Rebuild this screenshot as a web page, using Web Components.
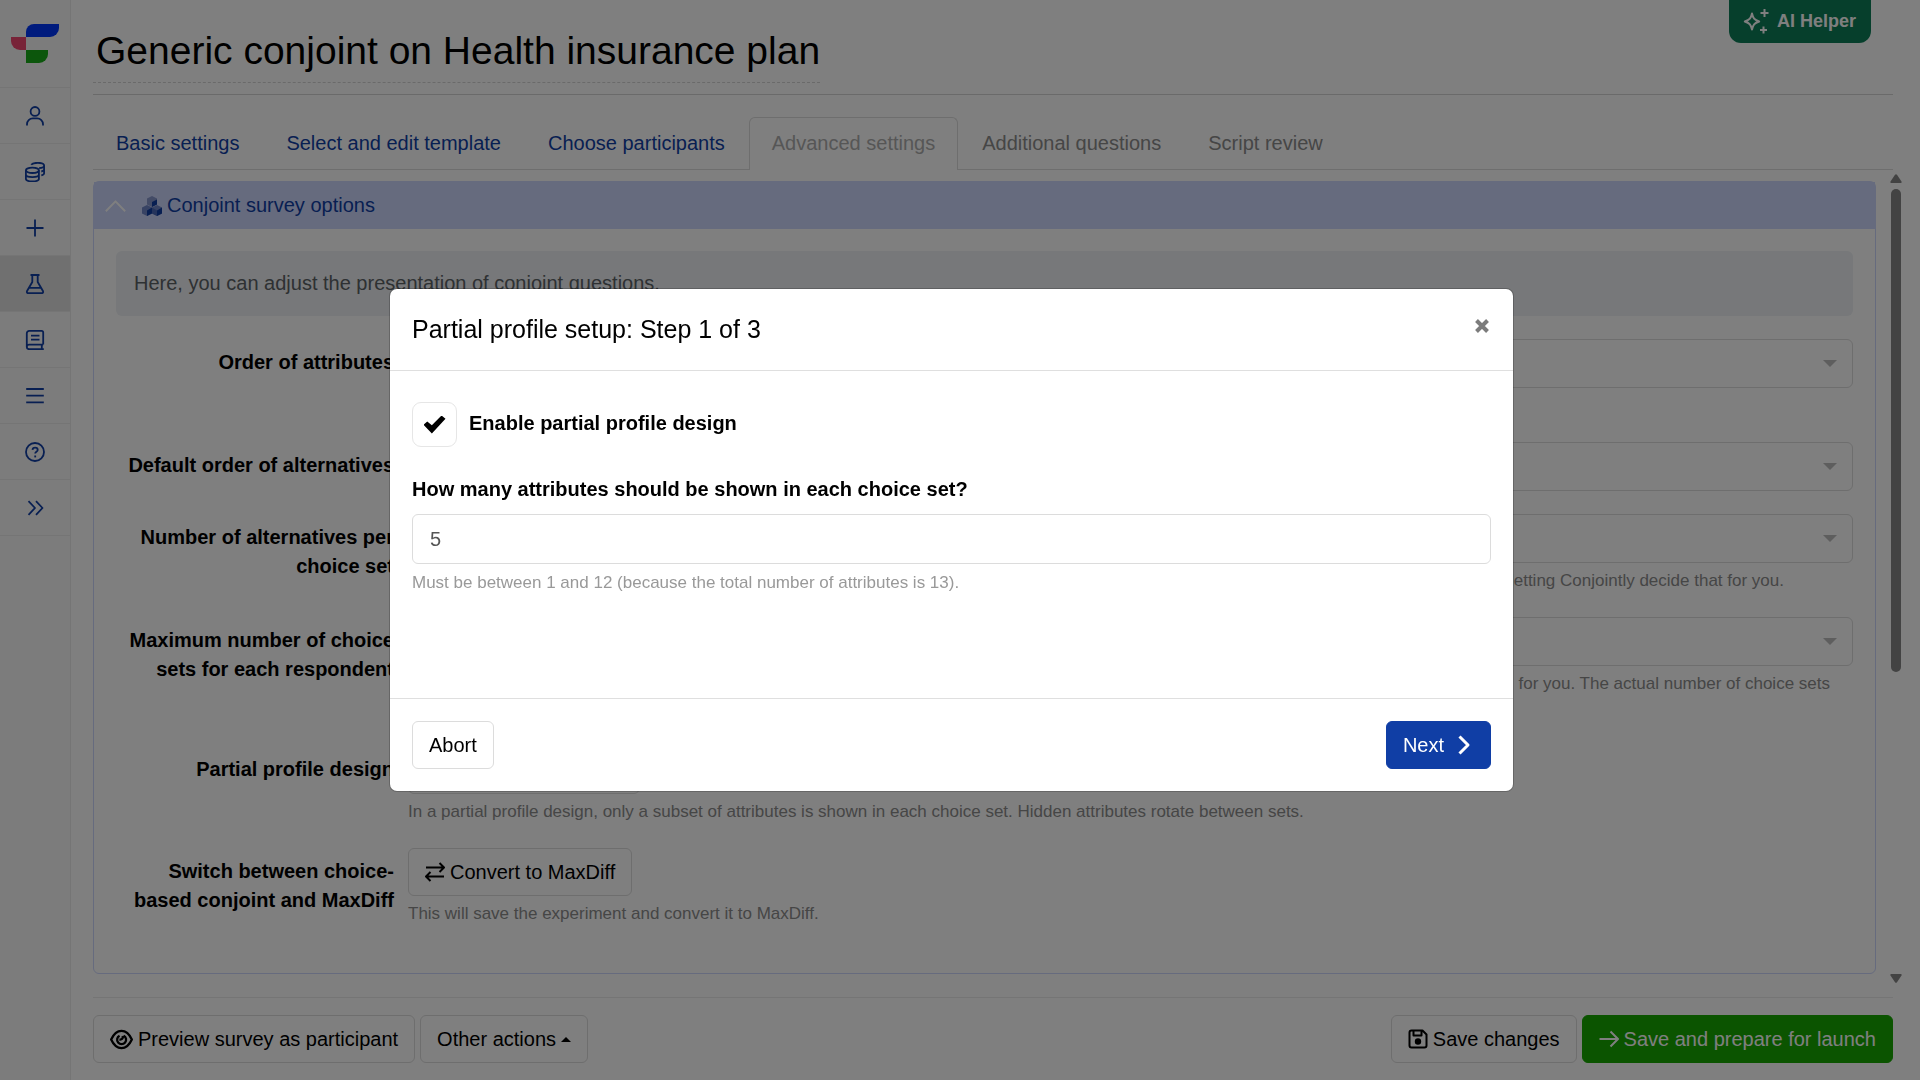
<!DOCTYPE html>
<html lang="en">
<head>
<meta charset="utf-8">
<title>Generic conjoint on Health insurance plan</title>
<style>
    body {
        margin: 0;
        font: 20px/29px "Liberation Sans", Arial, sans-serif;
        color: #000;
        background: #fff;
    }
</style>
</head>
<body>
<survey-app></survey-app>

<script>
const icons = {
    user: `<circle cx="10" cy="5.4" r="4.4"/><path d="M2 19.5v-1.3a5.8 5.8 0 0 1 5.8-5.8h4.4a5.8 5.8 0 0 1 5.8 5.8v1.3"/>`,
    data: `<ellipse cx="7.4" cy="8.3" rx="6.5" ry="2.7"/><path d="M.9 8.3v8.4c0 1.6 2.9 2.7 6.5 2.7s6.5-1.1 6.5-2.7V8.3M.9 12.500c0 1.500 2.900 2.600 6.500 2.600s6.500-1.100 6.500-2.600M6.200 2.800C7.400 1.300 10 .8 12.800 .8c3.600 0 6.300 1.100 6.300 2.700s-2.500 2.500-5 2.700M19.100 3.500v7.700c0 1-1 1.700-2.800 2.100M19.100 7.300c0 1-1 1.800-2.800 2.200"/>`,
    plus: `<path d="M10 1.500v17M1.500 10h17"/>`,
    flask: `<path d="M5.500 1h9M7.300 1v7L2.200 16.800c-.8 1.400-.1 2.400 1.300 2.400h13c1.400 0 2.100-1 1.300-2.400L12.700 8V1M4.500 13.800h11"/>`,
    book: `<path d="M18.200 14.600H4.200c-1.400 0-2.400 1-2.400 2.300s1 2.300 2.400 2.300h14.600M1.800 16.900V3.300C1.800 1.900 2.900.9 4.200.9h12.400c.9 0 1.600.7 1.600 1.600v12.100M16.800 14.600v4.600M6 5.600h8.500M6 9.600h8.500"/>`,
    menu: `<path d="M1.200 3h17.600M1.200 9.700h17.600M1.200 16.400h17.600"/>`,
    help: `<circle cx="10" cy="10" r="9"/><path d="M7.500 7.900c.1-1.500 1.200-2.300 2.600-2.300 1.500 0 2.600.9 2.600 2.300 0 1.700-2.500 1.900-2.500 3.500"/><path d="M10.200 13.500v1.900"/>`,
    forward: `<path d="M3.500 3.200 10 10l-6.500 6.800M11 3.200 17.500 10 11 16.800"/>`,
    swap: `<path d="M1 5.500h18M14.500 1 19 5.500 14.500 10M19 14.500H1M5.500 10 1 14.500 5.500 19"/>`,
    eye: `<path d="M1 10c2.200-4.800 5.300-7.500 9-7.500s6.800 2.700 9 7.500c-2.200 4.800-5.300 7.500-9 7.500S3.200 14.800 1 10z"/><path d="M8.300 6.700a3.900 3.900 0 1 0 3.600 0M10.800 7c.9 2-.5 3.400-2.600 3"/>`,
    save: `<path d="M1.500 3.500c0-1.200.8-2 2-2h11l4 4v11c0 1.200-.8 2-2 2h-13c-1.200 0-2-.8-2-2zM5.500 1.800v4.700h8V1.800"/><circle cx="10" cy="12.500" r="2.200" fill="currentColor"/>`,
    arrow: `<path d="M.5 10h18.500M11.500 2.500 19 10l-7.500 7.500"/>`,
    next: `<path d="M5.500 1.500 14 10l-8.500 8.500"/>`,
    up: `<path d="M.8 15.500 10 6l9.200 9.500"/>`
};

const icon = (name, size = 20, stroke = 1.8) => `
    <svg width="${size}" height="${size}" viewBox="0 0 20 20" fill="none" stroke="currentColor"
        stroke-width="${stroke}" stroke-linejoin="round" aria-hidden="true">${icons[name]}</svg>`;

class SideNav extends HTMLElement{

    constructor(){
        super();
        this.attachShadow({ mode : "open"});
    }

    static get styles(){
        return `
            :host{
                display: block;
                width: 70px;
                flex: none;
                background: #f8f8f8;
                border-right: 1px solid #ebebeb;
            }

            a{
                display: flex;
                align-items: center;
                justify-content: center;
                height: 55px;
                border-bottom: 1px solid #ebebeb;
                color: #103ea5;
            }

            a.logo{
                height: 87px;
            }

            a.active{
                background: #e0e0e0;
            }
        `
    }

    connectedCallback(){
        const items = [
            ["user", "Account"], ["data", "Data"], ["plus", "New"], ["flask", "Experiments"],
            ["book", "Guides"], ["menu", "Menu"], ["help", "Help"], ["forward", "Expand"]
        ];
        this.shadowRoot.innerHTML = `
        <style>${SideNav.styles}</style>
        <nav>
            <a class="logo" href="#" aria-label="Home">
                <svg width="48" height="40" viewBox="0 0 48 40">
                    <path fill="#0036fa" d="M15 13V8a8 8 0 0 1 8-8h25v4a9 9 0 0 1-9 9z"/>
                    <path fill="#f04770" d="M0 13h15v13H9a9 9 0 0 1-9-9z"/>
                    <path fill="#18ac18" d="M15 26h22v4a9 9 0 0 1-9 9H15z"/>
                </svg>
            </a>
            ${items.map(([name, label]) => `
                <a href="#" aria-label="${label}" class="${name === "flask" ? "active" : ""}">${icon(name)}</a>
            `).join("")}
        </nav>
        `
    }
}

class AiHelper extends HTMLElement{

    constructor(){
        super();
        this.attachShadow({ mode : "open"});
    }

    static get styles(){
        return `
            :host{
                position: absolute;
                top: 0;
                right: 49px;
            }

            button{
                display: flex;
                align-items: center;
                gap: 8px;
                height: 43px;
                padding: 0 15px 2px 14px;
                border: 0;
                border-radius: 0 0 12px 12px;
                background: #0c7e58;
                color: #fff;
                font: bold 18px/24px "Liberation Sans", Arial, sans-serif;
            }
        `
    }

    connectedCallback(){
        this.shadowRoot.innerHTML = `
        <style>${AiHelper.styles}</style>
        <button type="button">
            <svg width="26" height="26" viewBox="0 0 26 26" fill="none" stroke="currentColor" stroke-width="2" aria-hidden="true">
                <path d="M9 5.500c1 4.700 2.300 6.500 7.200 8-4.900 1.500-6.200 3.300-7.200 8-1-4.700-2.300-6.500-7.200-8 4.900-1.500 6.200-3.300 7.200-8z" stroke-linejoin="round"/>
                <path d="M21.500 1v8M17.500 5h8M20.500 18.500v7M17 22h7"/>
            </svg>
            <span>AI Helper</span>
        </button>
        `
    }
}

class AppButton extends HTMLElement{

    constructor(){
        super();
        this.attachShadow({ mode : "open"});
    }

    static get styles(){
        return `
            :host{
                display: inline-block;
            }

            button{
                display: flex;
                align-items: center;
                gap: 5px;
                height: 48px;
                padding: 0 16px;
                border: 1px solid #dcdcdc;
                border-radius: 6px;
                background: #fff;
                color: #000;
                font: inherit;
                white-space: nowrap;
            }

            :host([kind=primary]) button{
                gap: 10px;
                background: #103ea5;
                border-color: #103ea5;
                color: #fff;
            }

            :host([kind=success]) button{
                background: #16a800;
                border-color: #16a800;
                color: #fff;
            }

            .caret{
                border: 5px solid transparent;
                border-top-width: 0;
                border-bottom-color: currentColor;
            }
        `
    }

    connectedCallback(){
        const name = this.getAttribute("icon");
        const after = this.getAttribute("icon-after");
        this.shadowRoot.innerHTML = `
        <style>${AppButton.styles}</style>
        <button type="button">
            ${name ? icon(name, name === "eye" ? 23 : 20, 2) : ""}
            <slot></slot>
            ${after === "caret" ? `<span class="caret"></span>` : after ? icon(after, 20, 3) : ""}
        </button>
        `
    }
}

class StepTabs extends HTMLElement{

    constructor(){
        super();
        this.attachShadow({ mode : "open"});
    }

    static get styles(){
        return `
            :host{
                display: block;
                border-bottom: 1px solid #dcdcdc;
            }

            nav{
                display: flex;
                gap: 1px;
            }

            a{
                padding: 11px 22px;
                border: 1px solid transparent;
                border-bottom: 0;
                color: #103ea5;
                text-decoration: none;
                white-space: nowrap;
            }

            a.disabled{
                color: #8c8c8c;
            }

            a.active{
                margin-bottom: -1px;
                padding-bottom: 12px;
                border-color: #dcdcdc;
                border-radius: 6px 6px 0 0;
                background: #fff;
                color: #adadad;
            }
        `
    }

    connectedCallback(){
        this.shadowRoot.innerHTML = `
        <style>${StepTabs.styles}</style>
        <nav>
            <a href="#">Basic settings</a>
            <a href="#">Select and edit template</a>
            <a href="#">Choose participants</a>
            <a href="#" class="active" aria-current="step">Advanced settings</a>
            <a href="#" class="disabled">Additional questions</a>
            <a href="#" class="disabled">Script review</a>
        </nav>
        `
    }
}

// One settings line: label on the left, a select or slotted control on the right
class FormRow extends HTMLElement{

    constructor(){
        super();
        this.attachShadow({ mode : "open"});
    }

    static get styles(){
        return `
            :host{
                display: grid;
                grid-template-columns: 278px 1fr;
                column-gap: 14px;
                margin-bottom: 23px;
            }

            .label{
                padding-top: 9px;
                font-weight: bold;
                text-align: right;
            }

            .select{
                display: grid;
                align-items: center;
            }

            .select > *{
                grid-area: 1 / 1;
            }

            select{
                appearance: none;
                width: 100%;
                height: 49px;
                padding: 0 16px;
                border: 1px solid #dcdcdc;
                border-radius: 6px;
                background: #fff;
                font: inherit;
                opacity: 1;
            }

            .caret{
                justify-self: end;
                margin-right: 16px;
                border: 7px solid transparent;
                border-bottom-width: 0;
                border-top-color: #bcbcbc;
                pointer-events: none;
            }

            .help{
                padding-top: 5px;
                color: #8c8c8c;
                font-size: 17px;
                line-height: 26px;
            }

            .help.one{
                min-height: 26px;
            }

            .help.two{
                min-height: 52px;
            }

            :host([tail]) .help{
                text-align: right;
                padding-right: 23px;
            }

            :host([tail=wide]) .help{
                padding-right: 69px;
            }
        `
    }

    connectedCallback(){
        const label = this.getAttribute("label");
        const help = this.getAttribute("help");
        const lines = this.getAttribute("lines") || "one";
        const isSelect = this.hasAttribute("select");
        this.shadowRoot.innerHTML = `
        <style>${FormRow.styles}</style>
        ${isSelect ? `<label class="label" for="field">${label}</label>` : `<div class="label">${label}</div>`}
        <div>
            ${isSelect ? `
                <div class="select">
                    <select id="field" disabled><option></option></select>
                    <span class="caret"></span>
                </div>` : `<slot></slot>`}
            ${help === null ? "" : `<div class="help ${lines}">${help}</div>`}
        </div>
        `
    }
}

class OptionsPanel extends HTMLElement{

    constructor(){
        super();
        this.attachShadow({ mode : "open"});
    }

    static get styles(){
        return `
            :host{
                display: block;
                border: 1px solid #ccd6fc;
                border-radius: 6px;
            }

            header{
                display: flex;
                align-items: center;
                height: 47px;
                padding-left: 11px;
                background: #ccd6fc;
                color: #103ea5;
            }

            header > svg{
                color: #fff;
                margin-right: 16px;
            }

            h2{
                display: flex;
                align-items: center;
                gap: 5px;
                margin: 0;
                font-size: 20px;
                font-weight: normal;
            }

            .body{
                padding: 22px 22px 23px;
            }

            .note{
                margin-bottom: 23px;
                padding: 18px;
                border-radius: 6px;
                background: #eef1f4;
                color: #5c6267;
            }
        `
    }

    connectedCallback(){
        this.shadowRoot.innerHTML = `
        <style>${OptionsPanel.styles}</style>
        <header>
            ${icon("up", 21, 1.8)}
            <h2>
                <svg width="20" height="20" viewBox="0 0 20 20" aria-hidden="true">
                    <path fill="#8797cd" d="m10 0 5 2.500v6L10 11 5 8.500v-6z"/>
                    <path fill="#103ea5" d="m10 6 5-2.500v5L10 11z"/>
                    <path fill="#7186c8" d="m5 9 5 2.500v6L5 20l-5-2.500v-6z"/>
                    <path fill="#103ea5" d="m5 14.500 5-3v6L5 20z"/>
                    <path fill="#7186c8" d="m15 9 5 2.500v6L15 20l-5-2.500v-6z"/>
                    <path fill="#4a68b8" d="m10 11.500 5 3V20l-5-2.500z"/>
                    <path fill="#103ea5" d="m15 14.500 5-3v6L15 20z"/>
                </svg>
                Conjoint survey options
            </h2>
        </header>
        <div class="body">
            <div class="note">Here, you can adjust the presentation of conjoint questions.</div>
            <form-row select label="Order of attributes" help=""></form-row>
            <form-row select label="Default order of alternatives"></form-row>
            <form-row select tail="wide" label="Number of alternatives per choice set"
                help="letting Conjointly decide that for you."></form-row>
            <form-row select tail lines="two" label="Maximum number of choice sets for each respondent"
                help="for you. The actual number of choice sets"></form-row>
            <form-row label="Partial profile design"
                help="In a partial profile design, only a subset of attributes is shown in each choice set. Hidden attributes rotate between sets.">
                <app-button>Set up partial profile…</app-button>
            </form-row>
            <form-row label="Switch between choice-based conjoint and MaxDiff"
                help="This will save the experiment and convert it to MaxDiff.">
                <app-button icon="swap">Convert to MaxDiff</app-button>
            </form-row>
        </div>
        `
    }
}

class ScrollRail extends HTMLElement{

    constructor(){
        super();
        this.attachShadow({ mode : "open"});
    }

    static get styles(){
        return `
            :host{
                display: flex;
                flex-direction: column;
                align-items: center;
                gap: 6px;
                width: 12px;
                padding: 4px 0;
                color: #868686;
            }

            .track{
                flex: 1;
                width: 10px;
            }

            .thumb{
                height: 62%;
                border-radius: 5px;
                background: currentColor;
            }
        `
    }

    connectedCallback(){
        this.shadowRoot.innerHTML = `
        <style>${ScrollRail.styles}</style>
        <svg width="12" height="9" viewBox="0 0 12 9"><path fill="currentColor" d="M5 .8q1-1.200 2 0l4.500 6.700q.6 1.500-.8 1.500H1.300Q-.1 9 .5 7.500z"/></svg>
        <div class="track"><div class="thumb"></div></div>
        <svg width="12" height="9" viewBox="0 0 12 9"><path fill="currentColor" d="M5 8.200q1 1.200 2 0l4.500-6.700Q12.100 0 10.700 0H1.300Q-.1 0 .5 1.500z"/></svg>
        `
    }
}

class SetupDialog extends HTMLElement{

    constructor(){
        super();
        this.attachShadow({ mode : "open"});
    }

    static get styles(){
        return `
            :host{
                position: fixed;
                inset: 0;
                display: flex;
                align-items: center;
                justify-content: center;
                padding-right: 17px;
                background: rgba(0, 0, 0, .5);
            }

            section{
                width: 1123px;
                max-width: 90%;
                border-radius: 7px;
                background: #fff;
                box-shadow: 0 0 0 1px rgba(0, 0, 0, .2);
            }

            header, footer{
                display: flex;
                justify-content: space-between;
                padding: 22px;
            }

            header{
                border-bottom: 1px solid #dfdfdf;
            }

            footer{
                border-top: 1px solid #dfdfdf;
            }

            h1{
                margin: 0;
                font-size: 25px;
                font-weight: normal;
                line-height: 37px;
            }

            .close{
                display: flex;
                align-self: flex-start;
                padding: 8px 2px;
                border: 0;
                background: none;
                color: #7c7c7c;
            }

            .body{
                min-height: 274px;
                padding: 31px 22px 22px;
            }

            .check{
                display: flex;
                gap: 12px;
                margin-bottom: 28px;
                font-weight: bold;
            }

            .check label{
                padding-top: 7px;
            }

            input{
                box-sizing: border-box;
                margin: 0;
                border: 1px solid #dcdcdc;
                background: #fff;
            }

            input[type=checkbox]{
                appearance: none;
                display: grid;
                place-items: center;
                width: 45px;
                height: 45px;
                border-color: #e6e6e6;
                border-radius: 9px;
            }

            input[type=checkbox]:checked::before{
                content: "";
                width: 22px;
                height: 18px;
                background: #000;
                clip-path: polygon(0 52%, 17% 33%, 38% 54%, 82% 0, 100% 18%, 38% 100%);
            }

            .question{
                display: block;
                margin-bottom: 10px;
                font-weight: bold;
            }

            input[type=number]{
                appearance: textfield;
                display: block;
                width: 100%;
                height: 50px;
                padding: 0 17px;
                border-radius: 6px;
                color: #555;
                font: inherit;
            }

            .hint{
                padding-top: 6px;
                color: #999;
                font-size: 17px;
                line-height: 26px;
            }
        `
    }

    connectedCallback(){
        this.shadowRoot.innerHTML = `
        <style>${SetupDialog.styles}</style>
        <section role="dialog" aria-modal="true" aria-labelledby="title">
            <header>
                <h1 id="title">Partial profile setup: Step 1 of 3</h1>
                <button class="close" type="button" aria-label="Close">
                    <svg width="14" height="14" viewBox="0 0 14 14" stroke="currentColor" stroke-width="4"><path d="m1.500 1.500 11 11M12.500 1.500l-11 11"/></svg>
                </button>
            </header>
            <div class="body">
                <div class="check">
                    <input id="enable" type="checkbox" checked>
                    <label for="enable">Enable partial profile design</label>
                </div>
                <label class="question" for="count">How many attributes should be shown in each choice set?</label>
                <input id="count" type="number" min="1" max="12" value="5" aria-describedby="hint">
                <div class="hint" id="hint">Must be between 1 and 12 (because the total number of attributes is 13).</div>
            </div>
            <footer>
                <app-button>Abort</app-button>
                <app-button kind="primary" icon-after="next">Next</app-button>
            </footer>
        </section>
        `
    }
}

class SurveyApp extends HTMLElement{

    constructor(){
        super();
        this.attachShadow({ mode : "open"});
    }

    static get styles(){
        return `
            :host{
                display: flex;
                height: 100vh;
            }

            main{
                display: flex;
                flex: 1;
                flex-direction: column;
                min-width: 0;
                padding: 0 18px 0 22px;
            }

            header, step-tabs, footer{
                margin-right: 9px;
            }

            header{
                padding: 27px 0 11px;
                border-bottom: 1px solid #d4d4d4;
                margin-bottom: 22px;
            }

            h1{
                width: fit-content;
                margin: 0;
                padding: 0 0 7px 3px;
                border-bottom: 1px dashed #d4d4d4;
                font-size: 39px;
                font-weight: normal;
                line-height: 48px;
            }

            .scroll{
                display: flex;
                flex: 1;
                gap: 14px;
                min-height: 0;
                overflow: hidden;
            }

            options-panel{
                flex: 1;
                align-self: flex-start;
                margin-top: 11px;
            }

            footer{
                display: flex;
                gap: 5px;
                margin-top: 10px;
                padding: 17px 0;
                border-top: 1px solid #ebebeb;
            }

            .push{
                margin-left: auto;
            }
        `
    }

    connectedCallback(){
        this.shadowRoot.innerHTML = `
        <style>${SurveyApp.styles}</style>
        <side-nav></side-nav>
        <main>
            <header><h1>Generic conjoint on Health insurance plan</h1></header>
            <step-tabs></step-tabs>
            <div class="scroll">
                <options-panel></options-panel>
                <scroll-rail></scroll-rail>
            </div>
            <footer>
                <app-button icon="eye">Preview survey as participant</app-button>
                <app-button icon-after="caret">Other actions</app-button>
                <app-button class="push" icon="save">Save changes</app-button>
                <app-button kind="success" icon="arrow">Save and prepare for launch</app-button>
            </footer>
        </main>
        <ai-helper></ai-helper>
        <setup-dialog></setup-dialog>
        `
    }
}

customElements.define("side-nav", SideNav)
customElements.define("ai-helper", AiHelper)
customElements.define("app-button", AppButton)
customElements.define("step-tabs", StepTabs)
customElements.define("form-row", FormRow)
customElements.define("options-panel", OptionsPanel)
customElements.define("scroll-rail", ScrollRail)
customElements.define("setup-dialog", SetupDialog)
customElements.define("survey-app", SurveyApp)
</script>
</body>
</html>
